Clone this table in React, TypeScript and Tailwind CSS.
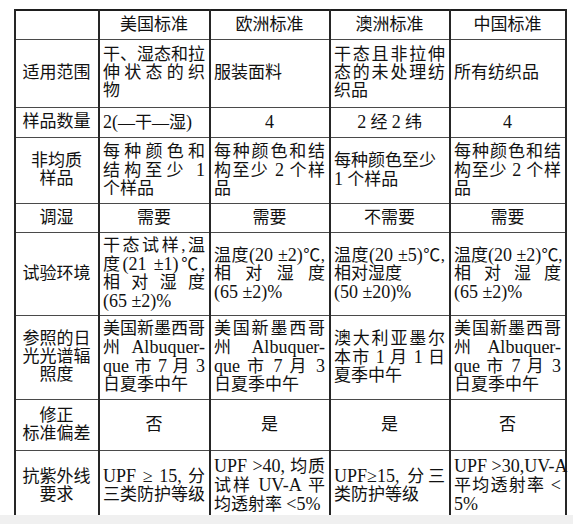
import React from "react";

const J = ({ children }: { children: React.ReactNode }) => (
  <div className="whitespace-nowrap text-justify [text-align-last:justify]">{children}</div>
);
const L = ({ children }: { children: React.ReactNode }) => (
  <div className="whitespace-nowrap">{children}</div>
);
const N = ({ children }: { children: React.ReactNode }) => (
  <span className="text-[18px] leading-[18px]">{children}</span>
);

const td =
  "border-x-2 border-x-[#262626] border-y-[1.5px] border-y-[#4a4a4a] pl-[3px] pr-[4px] py-0 align-middle";
const tdc = td + " text-center";

export default function App() {
  return (
    <div
      className="w-[573px] h-[524px] bg-white text-[#111111] text-[17px] leading-[18px]"
      style={{ fontFamily: "'Liberation Serif', 'Noto Sans CJK SC', serif" }}
    >
      <div className="h-[515px] overflow-hidden pt-[9px] pl-[14px]">
        <table className="table-fixed border-collapse border-2 border-[#1e1e1e] w-[551px]">
          <colgroup>
            <col className="w-[84px]" />
            <col className="w-[111px]" />
            <col className="w-[120px]" />
            <col className="w-[120px]" />
            <col className="w-[116px]" />
          </colgroup>
          <tbody>
            <tr className="h-[29px]">
              <td className={tdc}></td>
              <td className={tdc}>美国标准</td>
              <td className={tdc}>欧洲标准</td>
              <td className={tdc}>澳洲标准</td>
              <td className={tdc}>中国标准</td>
            </tr>
            <tr className="h-[68px]">
              <td className={tdc}>适用范围</td>
              <td className={td}>
                <J>干、湿态和拉</J>
                <J>伸状态的织</J>
                <L>物</L>
              </td>
              <td className={td}>服装面料</td>
              <td className={td}>
                <J>干态且非拉伸</J>
                <J>态的未处理纺</J>
                <L>织品</L>
              </td>
              <td className={td}>所有纺织品</td>
            </tr>
            <tr className="h-[30px]">
              <td className={tdc}>样品数量</td>
              <td className={td}>
                <N>2(</N>—干—湿<N>)</N>
              </td>
              <td className={tdc}>
                <N>4</N>
              </td>
              <td className={tdc}>
                <N>2</N> 经 <N>2</N> 纬
              </td>
              <td className={tdc}>
                <N>4</N>
              </td>
            </tr>
            <tr className="h-[66px]">
              <td className={tdc}>
                <L>非均质</L>
                <L>样品</L>
              </td>
              <td className={td}>
                <J>每种颜色和</J>
                <J>
                  结构至少 <N>1</N>
                </J>
                <L>个样品</L>
              </td>
              <td className={td}>
                <J>每种颜色和结</J>
                <J>
                  构至少 <N>2</N> 个样
                </J>
                <L>品</L>
              </td>
              <td className={td}>
                <L>每种颜色至少</L>
                <L>
                  <N>1</N> 个样品
                </L>
              </td>
              <td className={td}>
                <J>每种颜色和结</J>
                <J>
                  构至少 <N>2</N> 个样
                </J>
                <L>品</L>
              </td>
            </tr>
            <tr className="h-[29px]">
              <td className={tdc}>调湿</td>
              <td className={tdc}>需要</td>
              <td className={tdc}>需要</td>
              <td className={tdc}>不需要</td>
              <td className={tdc}>需要</td>
            </tr>
            <tr className="h-[83px]">
              <td className={tdc}>试验环境</td>
              <td className={td}>
                <J>干态试样,温</J>
                <J>
                  度<N>(21 ±1)</N>℃,
                </J>
                <J>相对湿度</J>
                <L>
                  <N>(65 ±2)%</N>
                </L>
              </td>
              <td className={td}>
                <J>
                  温度<N>(20 ±2)</N>℃,
                </J>
                <J>相对湿度</J>
                <L>
                  <N>(65 ±2)%</N>
                </L>
              </td>
              <td className={td}>
                <J>
                  温度<N>(20 ±5)</N>℃,
                </J>
                <L>相对湿度</L>
                <L>
                  <N>(50 ±20)%</N>
                </L>
              </td>
              <td className={td}>
                <J>
                  温度<N>(20 ±2)</N>℃,
                </J>
                <J>相对湿度</J>
                <L>
                  <N>(65 ±2)%</N>
                </L>
              </td>
            </tr>
            <tr className="h-[84px]">
              <td className={tdc}>
                <L>参照的日</L>
                <L>光光谱辐</L>
                <L>照度</L>
              </td>
              <td className={td}>
                <J>美国新墨西哥</J>
                <J>
                  州 <N>Albuquer-</N>
                </J>
                <J>
                  <N>que</N> 市 <N>7</N> 月 <N>3</N>
                </J>
                <L>日夏季中午</L>
              </td>
              <td className={td}>
                <J>美国新墨西哥</J>
                <J>
                  州 <N>Albuquer-</N>
                </J>
                <J>
                  <N>que</N> 市 <N>7</N> 月 <N>3</N>
                </J>
                <L>日夏季中午</L>
              </td>
              <td className={td}>
                <J>澳大利亚墨尔</J>
                <J>
                  本市 <N>1</N> 月 <N>1</N> 日
                </J>
                <L>夏季中午</L>
              </td>
              <td className={td}>
                <J>美国新墨西哥</J>
                <J>
                  州 <N>Albuquer-</N>
                </J>
                <J>
                  <N>que</N> 市 <N>7</N> 月 <N>3</N>
                </J>
                <L>日夏季中午</L>
              </td>
            </tr>
            <tr className="h-[51px]">
              <td className={tdc}>
                <L>修正</L>
                <L>标准偏差</L>
              </td>
              <td className={tdc}>否</td>
              <td className={tdc}>是</td>
              <td className={tdc}>是</td>
              <td className={tdc}>否</td>
            </tr>
            <tr className="h-[72px]">
              <td className={tdc}>
                <L>抗紫外线</L>
                <L>要求</L>
              </td>
              <td className={td}>
                <J>
                  <N>UPF ≥ 15,</N> 分
                </J>
                <L>三类防护等级</L>
              </td>
              <td className={td}>
                <J>
                  <N>UPF &gt;40,</N> 均质
                </J>
                <J>
                  试样 <N>UV-A</N> 平
                </J>
                <L>
                  均透射率 <N>&lt;5%</N>
                </L>
              </td>
              <td className={td}>
                <J>
                  <N>UPF≥15,</N> 分三
                </J>
                <L>类防护等级</L>
              </td>
              <td className={td}>
                <J>
                  <N>UPF &gt;30,UV-A</N>
                </J>
                <J>
                  平均透射率 <N>&lt;</N>
                </J>
                <L>
                  <N>5%</N>
                </L>
              </td>
            </tr>
          </tbody>
        </table>
      </div>
      <div className="h-[9px] bg-[#f0f0f0]" />
    </div>
  );
}
